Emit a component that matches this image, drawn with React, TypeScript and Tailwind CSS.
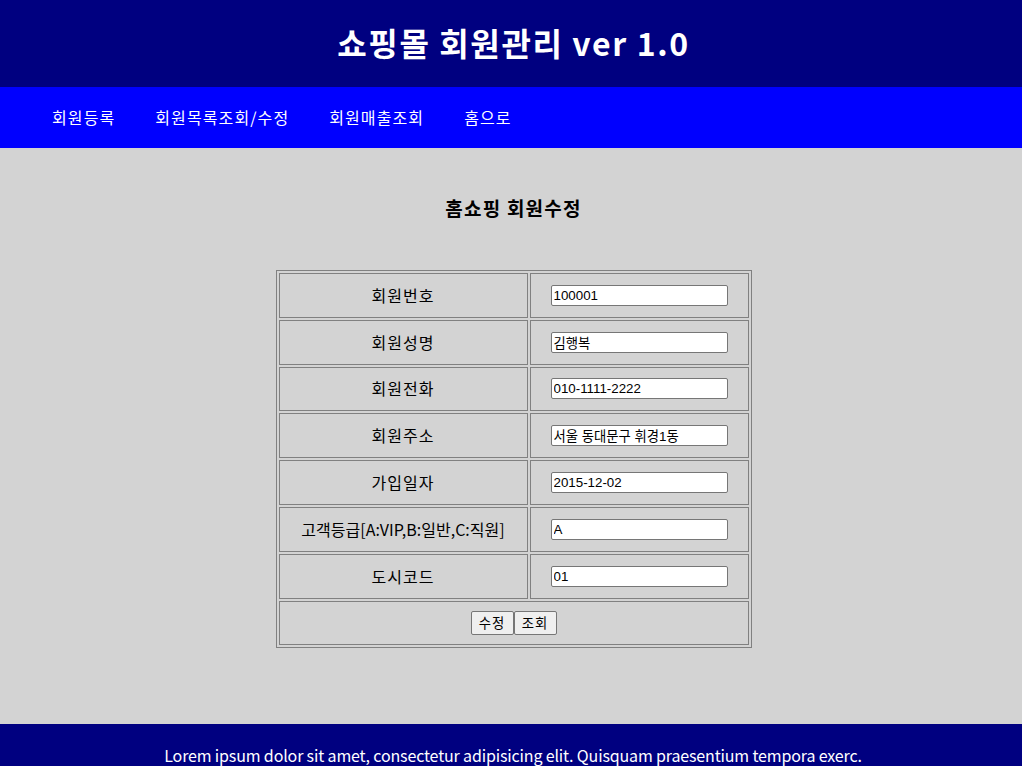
import React from "react";

const rows = [
	{ label: "회원번호", value: "100001" },
	{ label: "회원성명", value: "김행복" },
	{ label: "회원전화", value: "010-1111-2222" },
	{ label: "회원주소", value: "서울 동대문구 휘경1동" },
	{ label: "가입일자", value: "2015-12-02" },
	{ label: "고객등급[A:VIP,B:일반,C:직원]", value: "A", tight: true },
	{ label: "도시코드", value: "01" },
];

const menu = ["회원등록", "회원목록조회/수정", "회원매출조회", "홈으로"];

export default function App() {
	return (
		<div className="min-h-[766px] flex flex-col font-['Noto_Sans_CJK_KR',sans-serif] text-black">
			{/* Header */}
			<header className="h-[87px] bg-[#000080] flex items-center justify-center pb-[4px] pl-[5px]">
				<h1 className="text-[32px] font-bold text-white leading-none tracking-[1.6px]">
					쇼핑몰 회원관리 ver 1.0
				</h1>
			</header>

			{/* Nav */}
			<nav className="h-[61px] bg-[#0000ff] flex items-center pl-[52px] gap-[40px] pb-[2px]">
				{menu.map((m) => (
					<span key={m} className="text-white text-[16px] tracking-[1.1px]">
						{m}
					</span>
				))}
			</nav>

			{/* Content */}
			<section className="h-[576px] bg-[#d3d3d3] flex flex-col items-center">
				<h2 className="mt-[48px] ml-[5px] text-[19px] font-bold leading-[24px] tracking-[1.2px]">
					홈쇼핑 회원수정
				</h2>
				<table className="mt-[50px] ml-[5px] w-[476px] border-separate border-spacing-[2px] border border-[#808080]">
					<tbody>
						{rows.map((r) => (
							<tr key={r.label}>
								<td
									className={
										r.tight
											? "w-[249px] h-[44.8px] border border-[#808080] text-center text-[16px] pb-[1px]"
											: "w-[249px] h-[44.8px] border border-[#808080] text-center text-[16px] tracking-[1px] pb-[1px]"
									}
								>
									{r.label}
								</td>
								<td className="h-[44.8px] border border-[#808080] pl-[20px]">
									<input
										type="text"
										defaultValue={r.value}
										className="block w-[177px] h-[21px] bg-white border border-[#767676] rounded-[2px] px-[2px] text-[13.33px] font-['Liberation_Sans','Noto_Sans_CJK_KR',sans-serif]"
									/>
								</td>
							</tr>
						))}
						<tr>
							<td
								colSpan={2}
								className="h-[44.8px] border border-[#808080] text-center"
							>
								<div className="flex justify-center">
									<button
										type="button"
										className="w-[43px] h-[24px] bg-[#efefef] border border-[#767676] rounded-[2px] text-[13.33px] tracking-[1px]"
									>
										수정
									</button>
									<button
										type="button"
										className="w-[43px] h-[24px] bg-[#efefef] border border-[#767676] rounded-[2px] text-[13.33px] tracking-[1px]"
									>
										조회
									</button>
								</div>
							</td>
						</tr>
					</tbody>
				</table>
			</section>

			{/* Footer */}
			<footer className="bg-[#000080] h-[60px] flex justify-center pt-[19px] pl-[4px]">
				<p className="text-white text-[16px] leading-[24px] tracking-[-0.15px]">
					Lorem ipsum dolor sit amet, consectetur adipisicing elit. Quisquam
					praesentium tempora exerc.
				</p>
			</footer>
		</div>
	);
}
